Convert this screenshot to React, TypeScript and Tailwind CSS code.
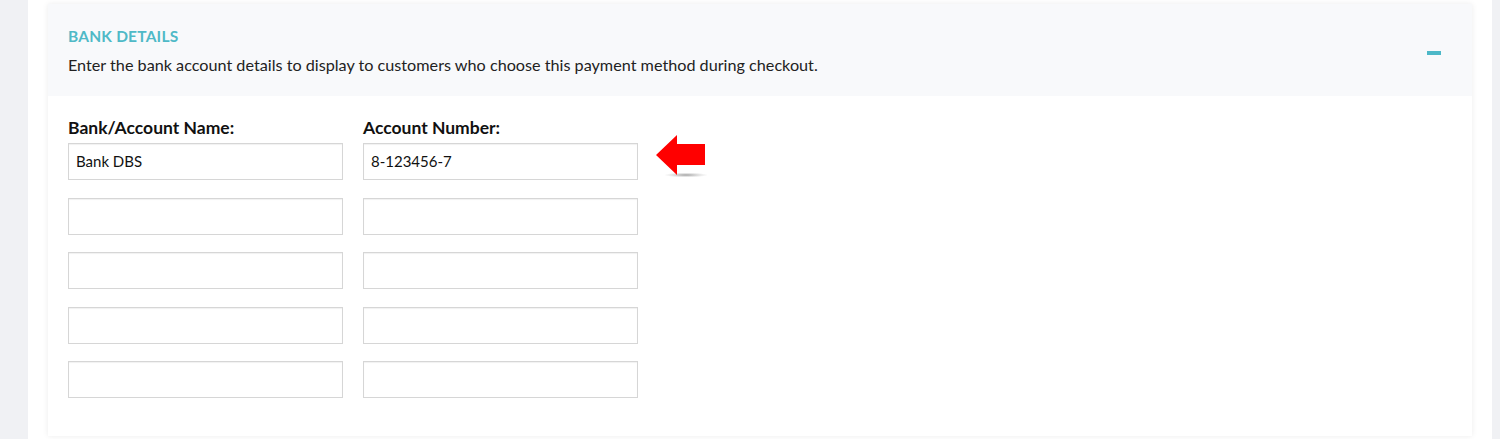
import React from "react";

const rows = [
  ["Bank DBS", "8-123456-7"],
  ["", ""],
  ["", ""],
  ["", ""],
  ["", ""],
];

function Arrow() {
  return (
    <svg width="54" height="46" viewBox="0 0 54 46" className="ml-[17px] mt-[-10px] shrink-0">
      <defs>
        <radialGradient id="sh" cx="50%" cy="50%" r="50%">
          <stop offset="0%" stopColor="#8f8f8f" stopOpacity="0.85" />
          <stop offset="100%" stopColor="#bbbbbb" stopOpacity="0" />
        </radialGradient>
      </defs>
      <ellipse cx="31" cy="42" rx="22" ry="2.5" fill="url(#sh)" />
      <polygon points="1,22 22,2 22,11 50,11 50,32 22,32 22,42" fill="#ff0000" />
    </svg>
  );
}

export default function App() {
  return (
    <div
      className="w-[1500px] h-[439px] bg-[#f0f1f4] flex overflow-hidden"
      style={{ fontFamily: "'Source Sans Pro', Lato, 'Noto Sans', sans-serif" }}
    >
      <div className="ml-[28px] w-[1464px] h-full bg-white pl-[20px] pt-[4px]">
        <div className="w-[1424px] h-[432px] bg-white shadow-[0_0_6px_rgba(0,0,0,0.08)] flex flex-col">
          <div className="h-[92px] bg-[#f8f9fb] flex items-start justify-between pl-[20px] pr-[31px] pt-[22px]">
            <div>
              <div className="text-[15.5px] font-bold text-[#4fb9c7] leading-[20px] tracking-[0.2px]">BANK DETAILS</div>
              <div className="text-[16.2px] text-[#222] leading-[20px] mt-[9px]">
                Enter the bank account details to display to customers who choose this payment method during checkout.
              </div>
            </div>
            <div className="w-[14px] h-[4px] bg-[#4db8c8] mt-[25px]" />
          </div>
          <div className="pl-[20px] pt-[21px]">
            <div className="flex gap-[20px]">
              <div className="w-[275px] text-[17.5px] font-bold text-[#111] leading-[22px]">Bank/Account Name:</div>
              <div className="w-[275px] text-[17.5px] font-bold text-[#111] leading-[22px]">Account Number:</div>
            </div>
            <div className="flex flex-col gap-[17.5px] mt-[4px]">
              {rows.map((r, i) => (
                <div key={i} className="flex items-start">
                  <div className="w-[275px] h-[37px] border border-[#d6d6d6] shadow-[inset_0_1px_1px_rgba(0,0,0,0.06)] px-[7px] flex items-center text-[15px] text-[#111]">
                    {r[0]}
                  </div>
                  <div className="w-[275px] h-[37px] ml-[20px] border border-[#d6d6d6] shadow-[inset_0_1px_1px_rgba(0,0,0,0.06)] px-[7px] flex items-center text-[15px] text-[#111]">
                    {r[1]}
                  </div>
                  {i === 0 && <Arrow />}
                </div>
              ))}
            </div>
          </div>
        </div>
      </div>
    </div>
  );
}
